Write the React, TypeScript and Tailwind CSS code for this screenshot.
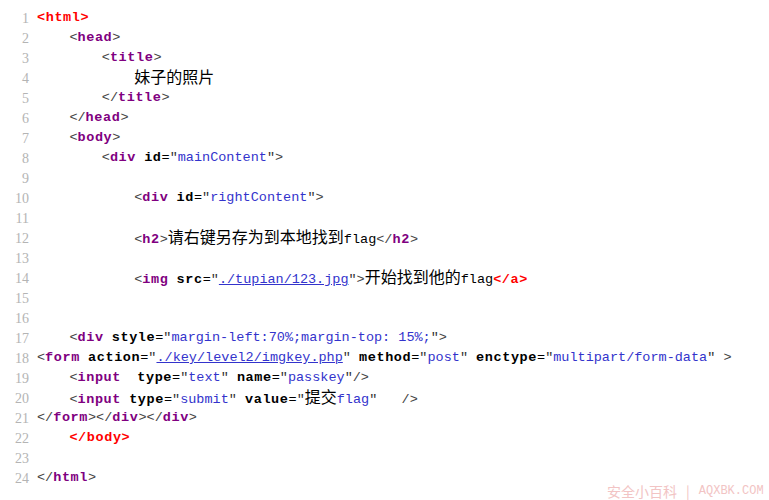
import React from "react";

const mono = { fontFamily: '"Liberation Mono", "Noto Sans CJK SC", monospace' };

const B = ({ c }: { c: string }) => <span className="text-[#444]">{c}</span>;
const T = ({ c }: { c: string }) => <span className="font-bold tracking-[0.6px] text-[#800080]">{c}</span>;
const R = ({ c }: { c: string }) => <span className="font-bold tracking-[0.6px] text-[#ff0000]">{c}</span>;
const A = ({ c }: { c: string }) => <span className="font-bold tracking-[0.6px] text-black">{c}</span>;
const V = ({ c }: { c: string }) => <span className="text-[#3333cc]">{c}</span>;
const U = ({ c }: { c: string }) => <span className="text-[#3333cc] underline">{c}</span>;
const Q = () => <span className="text-[#333]">"</span>;
const C = ({ c }: { c: string }) => (
  <span className="text-[16px] text-black" style={{ fontFamily: '"Noto Sans CJK SC", sans-serif' }}>{c}</span>
);
const P = ({ c }: { c: string }) => <span className="text-black">{c}</span>;

const sp = (n: number) => " ".repeat(n);

const lines: React.ReactNode[] = [
  <><R c="<html>" /></>,
  <>{sp(4)}<B c="<" /><T c="head" /><B c=">" /></>,
  <>{sp(8)}<B c="<" /><T c="title" /><B c=">" /></>,
  <>{sp(12)}<C c="妹子的照片" /></>,
  <>{sp(8)}<B c="</" /><T c="title" /><B c=">" /></>,
  <>{sp(4)}<B c="</" /><T c="head" /><B c=">" /></>,
  <>{sp(4)}<B c="<" /><T c="body" /><B c=">" /></>,
  <>{sp(8)}<B c="<" /><T c="div" /> <A c="id" /><P c="=" /><Q /><V c="mainContent" /><Q /><B c=">" /></>,
  <></>,
  <>{sp(12)}<B c="<" /><T c="div" /> <A c="id" /><P c="=" /><Q /><V c="rightContent" /><Q /><B c=">" /></>,
  <></>,
  <>{sp(12)}<B c="<" /><T c="h2" /><B c=">" /><C c="请右键另存为到本地找到" /><P c="flag" /><B c="</" /><T c="h2" /><B c=">" /></>,
  <></>,
  <>{sp(12)}<B c="<" /><T c="img" /> <A c="src" /><P c="=" /><Q /><U c="./tupian/123.jpg" /><Q /><B c=">" /><C c="开始找到他的" /><P c="flag" /><R c="</a>" /></>,
  <></>,
  <></>,
  <>{sp(4)}<B c="<" /><T c="div" /> <A c="style" /><P c="=" /><Q /><V c="margin-left:70%;margin-top: 15%;" /><Q /><B c=">" /></>,
  <><B c="<" /><T c="form" /> <A c="action" /><P c="=" /><Q /><U c="./key/level2/imgkey.php" /><Q /> <A c="method" /><P c="=" /><Q /><V c="post" /><Q /> <A c="enctype" /><P c="=" /><Q /><V c="multipart/form-data" /><Q /> <B c=">" /></>,
  <>{sp(4)}<B c="<" /><T c="input" />{sp(2)}<A c="type" /><P c="=" /><Q /><V c="text" /><Q /> <A c="name" /><P c="=" /><Q /><V c="passkey" /><Q /><B c="/>" /></>,
  <>{sp(4)}<B c="<" /><T c="input" /> <A c="type" /><P c="=" /><Q /><V c="submit" /><Q /> <A c="value" /><P c="=" /><Q /><C c="提交" /><V c="flag" /><Q />{sp(3)}<B c="/>" /></>,
  <><B c="</" /><T c="form" /><B c="></" /><T c="div" /><B c="></" /><T c="div" /><B c=">" /></>,
  <>{sp(4)}<R c="</body>" /></>,
  <></>,
  <><B c="</" /><T c="html" /><B c=">" /></>,
];

export default function App() {
  return (
    <div className="relative w-[769px] h-[500px] bg-white overflow-hidden pt-[8px]">
      {lines.map((l, i) => (
        <div key={i} className="flex h-[20px] items-center">
          <div
            className="w-[29px] shrink-0 text-right text-[14px] text-[#b4b4b4]"
            style={{ fontFamily: '"Liberation Serif", serif' }}
          >
            {i + 1}
          </div>
          <div className="pl-[8px] whitespace-pre text-[13.5px] leading-[20px]" style={mono}>
            {l}
          </div>
        </div>
      ))}
      <div
        className="absolute left-[607px] top-[482px] flex items-center gap-[9px] text-[14px] leading-[18px] text-[#f2c4c4] whitespace-pre"
        style={{ fontFamily: '"Noto Sans CJK SC", sans-serif' }}
      >
        <span>安全小百科</span>
        <span>|</span>
        <span className="text-[12px]" style={{ fontFamily: '"Liberation Mono", monospace' }}>AQXBK.COM</span>
      </div>
    </div>
  );
}
